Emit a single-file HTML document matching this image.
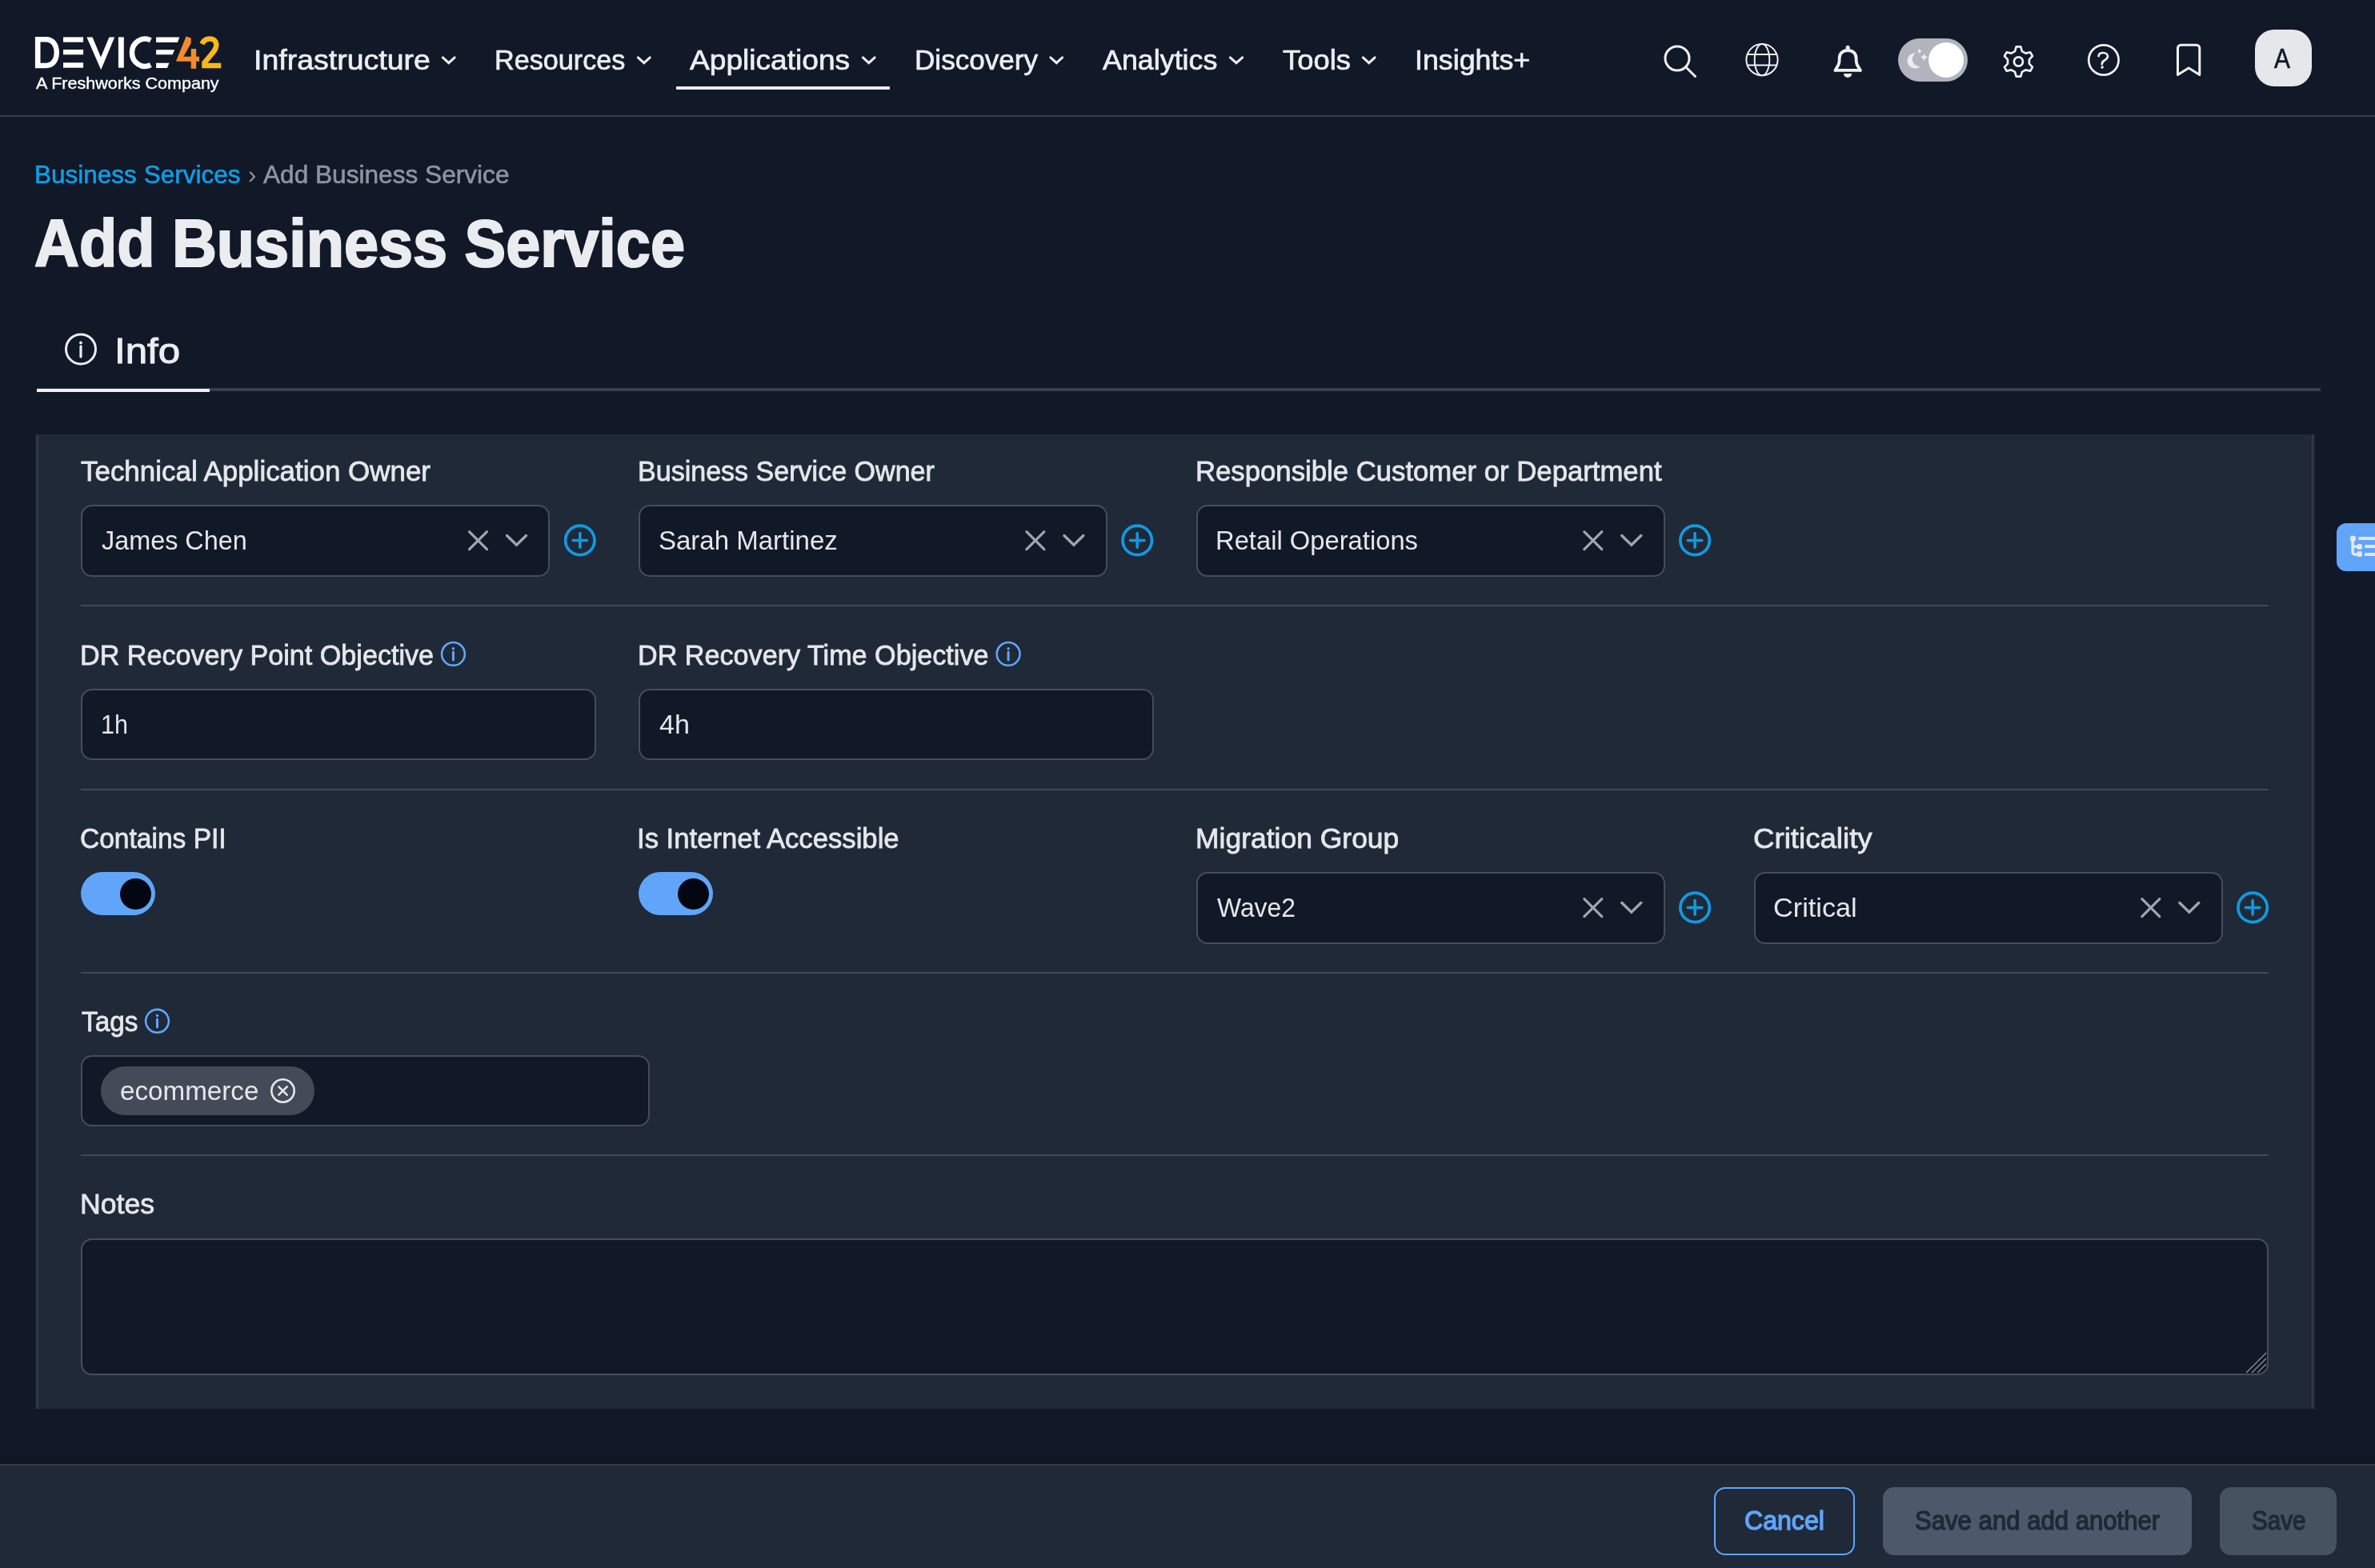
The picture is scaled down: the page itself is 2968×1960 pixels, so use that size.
<!DOCTYPE html>
<html><head><meta charset="utf-8"><title>Add Business Service</title>
<style>
html,body{margin:0;padding:0;background:#111827;}
body{width:2968px;height:1960px;overflow:hidden;font-family:"Liberation Sans",sans-serif;}
#pg{position:relative;width:2968px;height:1960px;overflow:hidden;background:#111827;}
#pg div,#pg span,#pg svg{position:absolute;box-sizing:border-box;}
.t{white-space:nowrap;transform-origin:0 0;display:block;}
.box{background:#111827;border:2px solid #454d5b;border-radius:14px;}
.sep{left:101px;width:2734px;height:2px;background:#414957;}
.tog{width:93px;height:54px;border-radius:27px;background:#60a5fa;}
.knob{width:39px;height:39px;border-radius:50%;background:#030712;}
@media (min-resolution:2dppx) and (max-width:1500px){html{zoom:0.5;}}
</style></head><body><div id="pg">
<!-- header -->
<div style="left:0;top:144px;width:2968px;height:2px;background:#373e4c;"></div>
<div style="left:845px;top:108px;width:267px;height:4px;background:#eceef1;"></div>
<!-- tabs line -->
<div style="left:46px;top:485px;width:2854px;height:4px;background:#373f4c;"></div>
<div style="left:46px;top:486px;width:216px;height:4px;background:#f1f2f5;"></div>
<!-- panel -->
<div style="left:44px;top:543px;width:2849px;height:1218px;background:#1f2937;"></div>
<div style="left:44px;top:543px;width:4px;height:1218px;background:linear-gradient(90deg,#1b2332,#39414e);"></div>
<div style="left:2889px;top:543px;width:4px;height:1218px;background:linear-gradient(90deg,#39414e,#1b2332);"></div>
<!-- row 1 -->
<div class="box" style="left:101px;top:631px;width:586px;height:90px;"></div>
<div class="box" style="left:798px;top:631px;width:586px;height:90px;"></div>
<div class="box" style="left:1495px;top:631px;width:585.5px;height:90px;"></div>
<div class="sep" style="top:756px;"></div>
<!-- row 2 -->
<div class="box" style="left:101px;top:861px;width:644px;height:89px;"></div>
<div class="box" style="left:798px;top:861px;width:644px;height:89px;"></div>
<div class="sep" style="top:986px;"></div>
<!-- row 3 -->
<div class="tog" style="left:101px;top:1090px;"></div><div class="knob" style="left:150px;top:1098px;"></div>
<div class="tog" style="left:798px;top:1090px;"></div><div class="knob" style="left:847px;top:1098px;"></div>
<div class="box" style="left:1495px;top:1090px;width:585.5px;height:90px;"></div>
<div class="box" style="left:2191.5px;top:1090px;width:586px;height:90px;"></div>
<div class="sep" style="top:1215px;"></div>
<!-- row 4 -->
<div class="box" style="left:101px;top:1319px;width:711px;height:89px;"></div>
<div style="left:126px;top:1332.5px;width:267px;height:61.5px;border-radius:31px;background:#444a57;"></div>
<div class="sep" style="top:1443px;"></div>
<!-- row 5 -->
<div class="box" style="left:101px;top:1548px;width:2734px;height:171px;"></div>
<!-- footer -->
<div style="left:0;top:1816px;width:2968px;height:14px;background:linear-gradient(180deg,rgba(10,14,24,0),rgba(10,14,24,0.32));"></div>
<div style="left:0;top:1830px;width:2968px;height:130px;background:#1f2937;border-top:2px solid #343c4a;"></div>
<div style="left:2142px;top:1859px;width:176px;height:85px;border:2px solid #60a5fa;border-radius:14px;"></div>
<div style="left:2353px;top:1859px;width:386px;height:85px;border-radius:14px;background:#4d596a;"></div>
<div style="left:2774px;top:1859px;width:146px;height:85px;border-radius:14px;background:#46525f;"></div>
<!-- right tab -->
<div style="left:2920px;top:654px;width:60px;height:60px;border-radius:12px;background:#60a5fa;"></div>
<!-- avatar + theme toggle -->
<div style="left:2818px;top:36.5px;width:71px;height:71.5px;border-radius:24px;background:#e5e7eb;"></div>
<div style="left:2372px;top:48px;width:87px;height:54px;border-radius:27px;background:#b1b4bd;"></div>
<div style="left:2410px;top:53px;width:44px;height:44px;border-radius:50%;background:#fff;"></div>
<svg width="2968" height="1960" viewBox="0 0 2968 1960" style="left:0;top:0">
<g fill="#fff">
<path fill-rule="evenodd" d="M43.9,46 H57.5 C68,46 74,54.2 74,65.6 C74,77 68,85.3 57.5,85.3 H43.9 Z M50.5,52.5 V78.8 H57.2 C63.6,78.8 67.6,73.6 67.6,65.6 C67.6,57.7 63.6,52.5 57.2,52.5 Z"/>
<rect x="79" y="46.4" width="25.1" height="6.30"/>
<rect x="79" y="62" width="25.1" height="6.30"/>
<rect x="79" y="78.3" width="25.1" height="6.40"/>
<polygon points="108.4,46.4 115.6,46.4 126,71.6 136.4,46.4 143.2,46.4 126.2,87.2"/>
<rect x="147.9" y="46.4" width="6.9" height="38.3"/>
<polygon points="195.1,46.6 224.3,46.6 221.9,53.1 195.1,53.1"/>
<polygon points="195.1,62.2 218.1,62.2 215.6,68.2 195.1,68.2"/>
<polygon points="195.1,78.7 211.4,78.7 209,84.9 195.1,84.9"/>
</g>
<path d="M188.3,50.3 A16.3,17.15 0 1 0 188.3,81.2" fill="none" stroke="#fff" stroke-width="6.5"/>
<g fill="#f28c28"><polygon points="232.6,45.4 238.7,47.4 238.7,54 229.3,70.8 249,70.8 249,76.7 219.9,76.7"/><rect x="238.7" y="61" width="6.5" height="24.8"/></g>
<path d="M252.4,55 C254.5,50.5 258,48.6 262,48.6 C267.5,48.6 270.3,52.2 270.3,56.2 C270.3,60 268.3,63.3 264.5,67.5 L255.5,78.5 V81.95 H276.2" fill="none" stroke="#fdb813" stroke-width="6.5" stroke-linejoin="miter"/>
<polyline points="553.35,71.95 560.75,78.65 568.15,71.95" fill="none" stroke="#eceef2" stroke-width="3" stroke-linecap="round" stroke-linejoin="miter"/>
<polyline points="797.35,71.95 804.80,78.65 812.25,71.95" fill="none" stroke="#eceef2" stroke-width="3" stroke-linecap="round" stroke-linejoin="miter"/>
<polyline points="1078.35,71.95 1085.75,78.65 1093.15,71.95" fill="none" stroke="#eceef2" stroke-width="3" stroke-linecap="round" stroke-linejoin="miter"/>
<polyline points="1312.85,71.95 1320.25,78.65 1327.65,71.95" fill="none" stroke="#eceef2" stroke-width="3" stroke-linecap="round" stroke-linejoin="miter"/>
<polyline points="1537.35,71.95 1545.00,78.65 1552.65,71.95" fill="none" stroke="#eceef2" stroke-width="3" stroke-linecap="round" stroke-linejoin="miter"/>
<polyline points="1703.35,71.95 1710.75,78.65 1718.15,71.95" fill="none" stroke="#eceef2" stroke-width="3" stroke-linecap="round" stroke-linejoin="miter"/>
<circle cx="2096" cy="73" r="15" fill="none" stroke="#eff0f3" stroke-width="3"/><path d="M2107,84 L2118.5,95.5" stroke="#eff0f3" stroke-width="3" stroke-linecap="round"/>
<g fill="none" stroke="#eff0f3" stroke-width="2"><circle cx="2202" cy="74.7" r="19.6"/><ellipse cx="2202" cy="74.7" rx="9.3" ry="19.6"/><path d="M2183.7,67.9 H2220.3 M2183.7,81.5 H2220.3"/></g>
<g fill="none" stroke="#eff0f3" stroke-width="3.8" stroke-linecap="round" stroke-linejoin="round"><path d="M2293.5,87.9 H2324.8"/><path d="M2293.6,87.8 L2297.6,80.8 C2298.9,78 2298.7,75.5 2298.7,72.4 C2298.7,66.6 2303.2,63 2309.15,63 C2315.1,63 2319.6,66.6 2319.6,72.4 C2319.6,75.5 2319.4,78 2320.7,80.8 L2324.7,87.8"/></g>
<path d="M2309.15,59.3 V62" stroke="#eff0f3" stroke-width="5" stroke-linecap="round" fill="none"/>
<path d="M2304,91.9 H2314.2 A5.1,5.1 0 0 1 2304,91.9 Z" fill="#eff0f3"/>
<path d="M2394.1,66.2 A9.7,9.7 0 1 0 2400.2,82.6 A8.9,8.9 0 0 1 2394.1,66.2 Z" fill="#eaecf0"/>
<path d="M2398.7,60.8 Q2399.3819999999996,63.217999999999996 2401.7999999999997,63.9 Q2399.3819999999996,64.582 2398.7,67.0 Q2398.018,64.582 2395.6,63.9 Q2398.018,63.217999999999996 2398.7,60.8 Z" fill="#eaecf0"/><path d="M2404.5,66.8 Q2405.534,70.466 2409.2,71.5 Q2405.534,72.534 2404.5,76.2 Q2403.466,72.534 2399.8,71.5 Q2403.466,70.466 2404.5,66.8 Z" fill="#eaecf0"/>
<path d="M2526.91,64.05 L2525.23,58.41 L2519.67,58.41 L2517.99,64.05 L2513.46,66.66 L2507.74,65.30 L2504.96,70.11 L2509.00,74.39 L2509.00,79.61 L2504.96,83.89 L2507.74,88.70 L2513.46,87.34 L2517.99,89.95 L2519.67,95.59 L2525.23,95.59 L2526.91,89.95 L2531.44,87.34 L2537.16,88.70 L2539.94,83.89 L2535.90,79.61 L2535.90,74.39 L2539.94,70.11 L2537.16,65.30 L2531.44,66.66 Z" fill="none" stroke="#eff0f3" stroke-width="2.7" stroke-linejoin="round"/><circle cx="2522.45" cy="77" r="5.55" fill="none" stroke="#eff0f3" stroke-width="2.7"/>
<circle cx="2628.9" cy="75" r="18.7" fill="none" stroke="#eff0f3" stroke-width="2.7"/>
<path d="M2622.6,70.2 C2622.8,67.4 2625.2,66 2628.2,66 C2631.5,66 2634,67.8 2634,70.5 C2634,73 2632.2,74 2629.8,75.5 C2627.6,76.9 2626.8,78.2 2626.8,80.2" fill="none" stroke="#eff0f3" stroke-width="2.7" stroke-linecap="round"/><circle cx="2627.1" cy="84.1" r="1.8" fill="#eff0f3"/>
<path d="M2721.5,60.2 a4,4 0 0 1 4,-4 h19.3 a4,4 0 0 1 4,4 v33.3 l-13.65,-8.6 l-13.65,8.6 Z" fill="none" stroke="#eff0f3" stroke-width="3" stroke-linejoin="round"/>
<circle cx="101" cy="436.4" r="18.5" fill="none" stroke="#eceef2" stroke-width="3"/><circle cx="101" cy="428.4" r="1.9" fill="#eceef2"/><path d="M101,432.79999999999995 V446.0" stroke="#eceef2" stroke-width="3.2" stroke-linecap="round" fill="none"/>
<circle cx="566.45" cy="817.4" r="14.4" fill="none" stroke="#60a5fa" stroke-width="2.6"/><circle cx="566.45" cy="810.6999999999999" r="1.75" fill="#60a5fa"/><path d="M566.45,815.0 V825.0" stroke="#60a5fa" stroke-width="3.0" stroke-linecap="round" fill="none"/>
<circle cx="1260.1" cy="817.4" r="14.4" fill="none" stroke="#60a5fa" stroke-width="2.6"/><circle cx="1260.1" cy="810.6999999999999" r="1.75" fill="#60a5fa"/><path d="M1260.1,815.0 V825.0" stroke="#60a5fa" stroke-width="3.0" stroke-linecap="round" fill="none"/>
<circle cx="196.5" cy="1276.3" r="14.4" fill="none" stroke="#60a5fa" stroke-width="2.6"/><circle cx="196.5" cy="1269.6" r="1.75" fill="#60a5fa"/><path d="M196.5,1273.8999999999999 V1283.8999999999999" stroke="#60a5fa" stroke-width="3.0" stroke-linecap="round" fill="none"/>
<path d="M586.50,664.60 L608.50,686.60 M608.50,664.60 L586.50,686.60" fill="none" stroke="#a0a5af" stroke-width="3.2" stroke-linecap="round"/>
<polyline points="633.53,669.53 645.50,681.19 657.47,669.53" fill="none" stroke="#a0a5af" stroke-width="3.4" stroke-linecap="round" stroke-linejoin="miter"/>
<circle cx="724.8" cy="675.4" r="18.2" fill="none" stroke="#0e9be3" stroke-width="3.7"/><path d="M716.0,675.4 H733.5999999999999 M724.8,666.6 V684.1999999999999" fill="none" stroke="#0e9be3" stroke-width="3.5" stroke-linecap="round"/>
<path d="M1282.90,664.60 L1304.90,686.60 M1304.90,664.60 L1282.90,686.60" fill="none" stroke="#a0a5af" stroke-width="3.2" stroke-linecap="round"/>
<polyline points="1329.93,669.53 1341.90,681.19 1353.87,669.53" fill="none" stroke="#a0a5af" stroke-width="3.4" stroke-linecap="round" stroke-linejoin="miter"/>
<circle cx="1421.1999999999998" cy="675.4" r="18.2" fill="none" stroke="#0e9be3" stroke-width="3.7"/><path d="M1412.3999999999999,675.4 H1429.9999999999998 M1421.1999999999998,666.6 V684.1999999999999" fill="none" stroke="#0e9be3" stroke-width="3.5" stroke-linecap="round"/>
<path d="M1979.80,664.60 L2001.80,686.60 M2001.80,664.60 L1979.80,686.60" fill="none" stroke="#a0a5af" stroke-width="3.2" stroke-linecap="round"/>
<polyline points="2026.83,669.53 2038.80,681.19 2050.77,669.53" fill="none" stroke="#a0a5af" stroke-width="3.4" stroke-linecap="round" stroke-linejoin="miter"/>
<circle cx="2118.1" cy="675.4" r="18.2" fill="none" stroke="#0e9be3" stroke-width="3.7"/><path d="M2109.2999999999997,675.4 H2126.9 M2118.1,666.6 V684.1999999999999" fill="none" stroke="#0e9be3" stroke-width="3.5" stroke-linecap="round"/>
<path d="M1979.80,1123.60 L2001.80,1145.60 M2001.80,1123.60 L1979.80,1145.60" fill="none" stroke="#a0a5af" stroke-width="3.2" stroke-linecap="round"/>
<polyline points="2026.83,1128.53 2038.80,1140.19 2050.77,1128.53" fill="none" stroke="#a0a5af" stroke-width="3.4" stroke-linecap="round" stroke-linejoin="miter"/>
<circle cx="2118.1" cy="1134.3999999999999" r="18.2" fill="none" stroke="#0e9be3" stroke-width="3.7"/><path d="M2109.2999999999997,1134.3999999999999 H2126.9 M2118.1,1125.6 V1143.1999999999998" fill="none" stroke="#0e9be3" stroke-width="3.5" stroke-linecap="round"/>
<path d="M2676.80,1123.60 L2698.80,1145.60 M2698.80,1123.60 L2676.80,1145.60" fill="none" stroke="#a0a5af" stroke-width="3.2" stroke-linecap="round"/>
<polyline points="2723.83,1128.53 2735.80,1140.19 2747.77,1128.53" fill="none" stroke="#a0a5af" stroke-width="3.4" stroke-linecap="round" stroke-linejoin="miter"/>
<circle cx="2815.1000000000004" cy="1134.3999999999999" r="18.2" fill="none" stroke="#0e9be3" stroke-width="3.7"/><path d="M2806.3,1134.3999999999999 H2823.9000000000005 M2815.1000000000004,1125.6 V1143.1999999999998" fill="none" stroke="#0e9be3" stroke-width="3.5" stroke-linecap="round"/>
<circle cx="353.5" cy="1363.5" r="14.2" fill="none" stroke="#e5e7eb" stroke-width="2.6"/>
<path d="M348.30,1358.30 L358.70,1368.70 M358.70,1358.30 L348.30,1368.70" fill="none" stroke="#e5e7eb" stroke-width="2.6" stroke-linecap="round"/>
<path d="M2807,1716 L2832,1691 M2814,1716 L2832,1698 M2821,1716 L2832,1705" stroke="#8f949d" stroke-width="1.2" fill="none"/>
<g fill="#e5e7eb"><rect x="2937" y="669.8" width="6.9" height="6.7" rx="1.8"/><rect x="2945.3" y="680" width="6.6" height="6.8" rx="2"/><rect x="2945.3" y="689.1" width="6.6" height="6.8" rx="2"/><rect x="2947" y="671" width="30" height="4" rx="2"/><rect x="2955" y="681" width="30" height="4"/><rect x="2955" y="691" width="30" height="4"/></g><path d="M2940.1,675 V690 a3,3 0 0 0 3,3 H2947 M2940.1,683.2 H2947" fill="none" stroke="#e5e7eb" stroke-width="3.6"/>
</svg>
<div id="tx" style="left:0;top:0;width:2968px;height:1960px;will-change:transform;">
<span class="t" style="left:316.75px;top:57px;font-size:35px;line-height:35px;color:#eceef2;-webkit-text-stroke:0.7px #eceef2;transform:scaleX(1.0713);">Infrastructure</span>
<span class="t" style="left:618.37px;top:57px;font-size:35px;line-height:35px;color:#eceef2;-webkit-text-stroke:0.7px #eceef2;transform:scaleX(0.9765);">Resources</span>
<span class="t" style="left:862.37px;top:57px;font-size:35px;line-height:35px;color:#eceef2;-webkit-text-stroke:0.7px #eceef2;transform:scaleX(1.0606);">Applications</span>
<span class="t" style="left:1142.61px;top:57px;font-size:35px;line-height:35px;color:#eceef2;-webkit-text-stroke:0.7px #eceef2;transform:scaleX(1.0026);">Discovery</span>
<span class="t" style="left:1378.36px;top:57px;font-size:35px;line-height:35px;color:#eceef2;-webkit-text-stroke:0.7px #eceef2;transform:scaleX(1.0239);">Analytics</span>
<span class="t" style="left:1602.80px;top:57px;font-size:35px;line-height:35px;color:#eceef2;-webkit-text-stroke:0.7px #eceef2;transform:scaleX(1.0400);">Tools</span>
<span class="t" style="left:1767.56px;top:57px;font-size:35px;line-height:35px;color:#eceef2;-webkit-text-stroke:0.7px #eceef2;transform:scaleX(1.0220);">Insights+</span>
<span class="t" style="left:44.99px;top:94px;font-size:20px;line-height:20px;color:#ffffff;-webkit-text-stroke:0.35px #ffffff;transform:scaleX(1.0770);">A Freshworks Company</span>
<span class="t" style="left:2842.36px;top:55px;font-size:35px;line-height:35px;color:#111827;-webkit-text-stroke:0.6px #111827;transform:scaleX(0.8542);">A</span>
<span class="t" style="left:42.83px;top:202px;font-size:32px;line-height:32px;color:#0f9ee6;-webkit-text-stroke:0.6px #0f9ee6;transform:scaleX(0.9848);">Business Services</span>
<span class="t" style="left:309.54px;top:202px;font-size:32px;line-height:32px;color:#8b95a1;transform:scaleX(0.9647);">›</span>
<span class="t" style="left:328.90px;top:202px;font-size:32px;line-height:32px;color:#8b95a1;-webkit-text-stroke:0.6px #8b95a1;transform:scaleX(0.9879);">Add Business Service</span>
<span class="t" style="left:42.70px;top:262px;font-size:84px;line-height:84px;color:#ebecf0;font-weight:700;-webkit-text-stroke:2.2px #ebecf0;transform:scaleX(0.9213);">Add Business Service</span>
<span class="t" style="left:143.30px;top:416px;font-size:45px;line-height:45px;color:#eceef2;-webkit-text-stroke:1.0px #eceef2;transform:scaleX(1.0945);">Info</span>
<span class="t" style="left:101.45px;top:571px;font-size:35px;line-height:35px;color:#e5e7eb;-webkit-text-stroke:0.8px #e5e7eb;transform:scaleX(0.9983);">Technical Application Owner</span>
<span class="t" style="left:796.93px;top:571px;font-size:35px;line-height:35px;color:#e5e7eb;-webkit-text-stroke:0.8px #e5e7eb;transform:scaleX(0.9727);">Business Service Owner</span>
<span class="t" style="left:1493.89px;top:571px;font-size:35px;line-height:35px;color:#e5e7eb;-webkit-text-stroke:0.8px #e5e7eb;transform:scaleX(0.9917);">Responsible Customer or Department</span>
<span class="t" style="left:100.12px;top:801px;font-size:35px;line-height:35px;color:#e5e7eb;-webkit-text-stroke:0.8px #e5e7eb;transform:scaleX(0.9754);">DR Recovery Point Objective</span>
<span class="t" style="left:796.92px;top:801px;font-size:35px;line-height:35px;color:#e5e7eb;-webkit-text-stroke:0.8px #e5e7eb;transform:scaleX(0.9759);">DR Recovery Time Objective</span>
<span class="t" style="left:100.41px;top:1030px;font-size:35px;line-height:35px;color:#e5e7eb;-webkit-text-stroke:0.8px #e5e7eb;transform:scaleX(0.9579);">Contains PII</span>
<span class="t" style="left:796.29px;top:1030px;font-size:35px;line-height:35px;color:#e5e7eb;-webkit-text-stroke:0.8px #e5e7eb;transform:scaleX(0.9906);">Is Internet Accessible</span>
<span class="t" style="left:1493.93px;top:1030px;font-size:35px;line-height:35px;color:#e5e7eb;-webkit-text-stroke:0.8px #e5e7eb;transform:scaleX(1.0134);">Migration Group</span>
<span class="t" style="left:2191.00px;top:1030px;font-size:35px;line-height:35px;color:#e5e7eb;-webkit-text-stroke:0.8px #e5e7eb;transform:scaleX(1.0474);">Criticality</span>
<span class="t" style="left:101.86px;top:1259px;font-size:35px;line-height:35px;color:#e5e7eb;-webkit-text-stroke:0.8px #e5e7eb;transform:scaleX(0.9523);">Tags</span>
<span class="t" style="left:100.32px;top:1487px;font-size:35px;line-height:35px;color:#e5e7eb;-webkit-text-stroke:0.8px #e5e7eb;transform:scaleX(1.0181);">Notes</span>
<span class="t" style="left:127.09px;top:658px;font-size:34px;line-height:34px;color:#e5e7eb;transform:scaleX(0.9521);">James Chen</span>
<span class="t" style="left:823.37px;top:658px;font-size:34px;line-height:34px;color:#e5e7eb;transform:scaleX(0.9706);">Sarah Martinez</span>
<span class="t" style="left:1519.04px;top:658px;font-size:34px;line-height:34px;color:#e5e7eb;transform:scaleX(0.9631);">Retail Operations</span>
<span class="t" style="left:125.69px;top:888px;font-size:34px;line-height:34px;color:#e5e7eb;transform:scaleX(0.8998);">1h</span>
<span class="t" style="left:823.97px;top:888px;font-size:34px;line-height:34px;color:#e5e7eb;transform:scaleX(1.0035);">4h</span>
<span class="t" style="left:1520.80px;top:1117px;font-size:34px;line-height:34px;color:#e5e7eb;transform:scaleX(0.9372);">Wave2</span>
<span class="t" style="left:2216.39px;top:1117px;font-size:34px;line-height:34px;color:#e5e7eb;transform:scaleX(1.0074);">Critical</span>
<span class="t" style="left:149.56px;top:1346px;font-size:34px;line-height:34px;color:#e5e7eb;transform:scaleX(0.9762);">ecommerce</span>
<span class="t" style="left:2180.16px;top:1883px;font-size:34px;line-height:34px;color:#60a5fa;-webkit-text-stroke:1.4px #60a5fa;transform:scaleX(0.9439);">Cancel</span>
<span class="t" style="left:2392.67px;top:1883px;font-size:34px;line-height:34px;color:#1f2937;-webkit-text-stroke:1.4px #1f2937;transform:scaleX(0.9152);">Save and add another</span>
<span class="t" style="left:2813.68px;top:1883px;font-size:34px;line-height:34px;color:#1f2937;-webkit-text-stroke:1.4px #1f2937;transform:scaleX(0.8711);">Save</span>
</div>
</div></body></html>
